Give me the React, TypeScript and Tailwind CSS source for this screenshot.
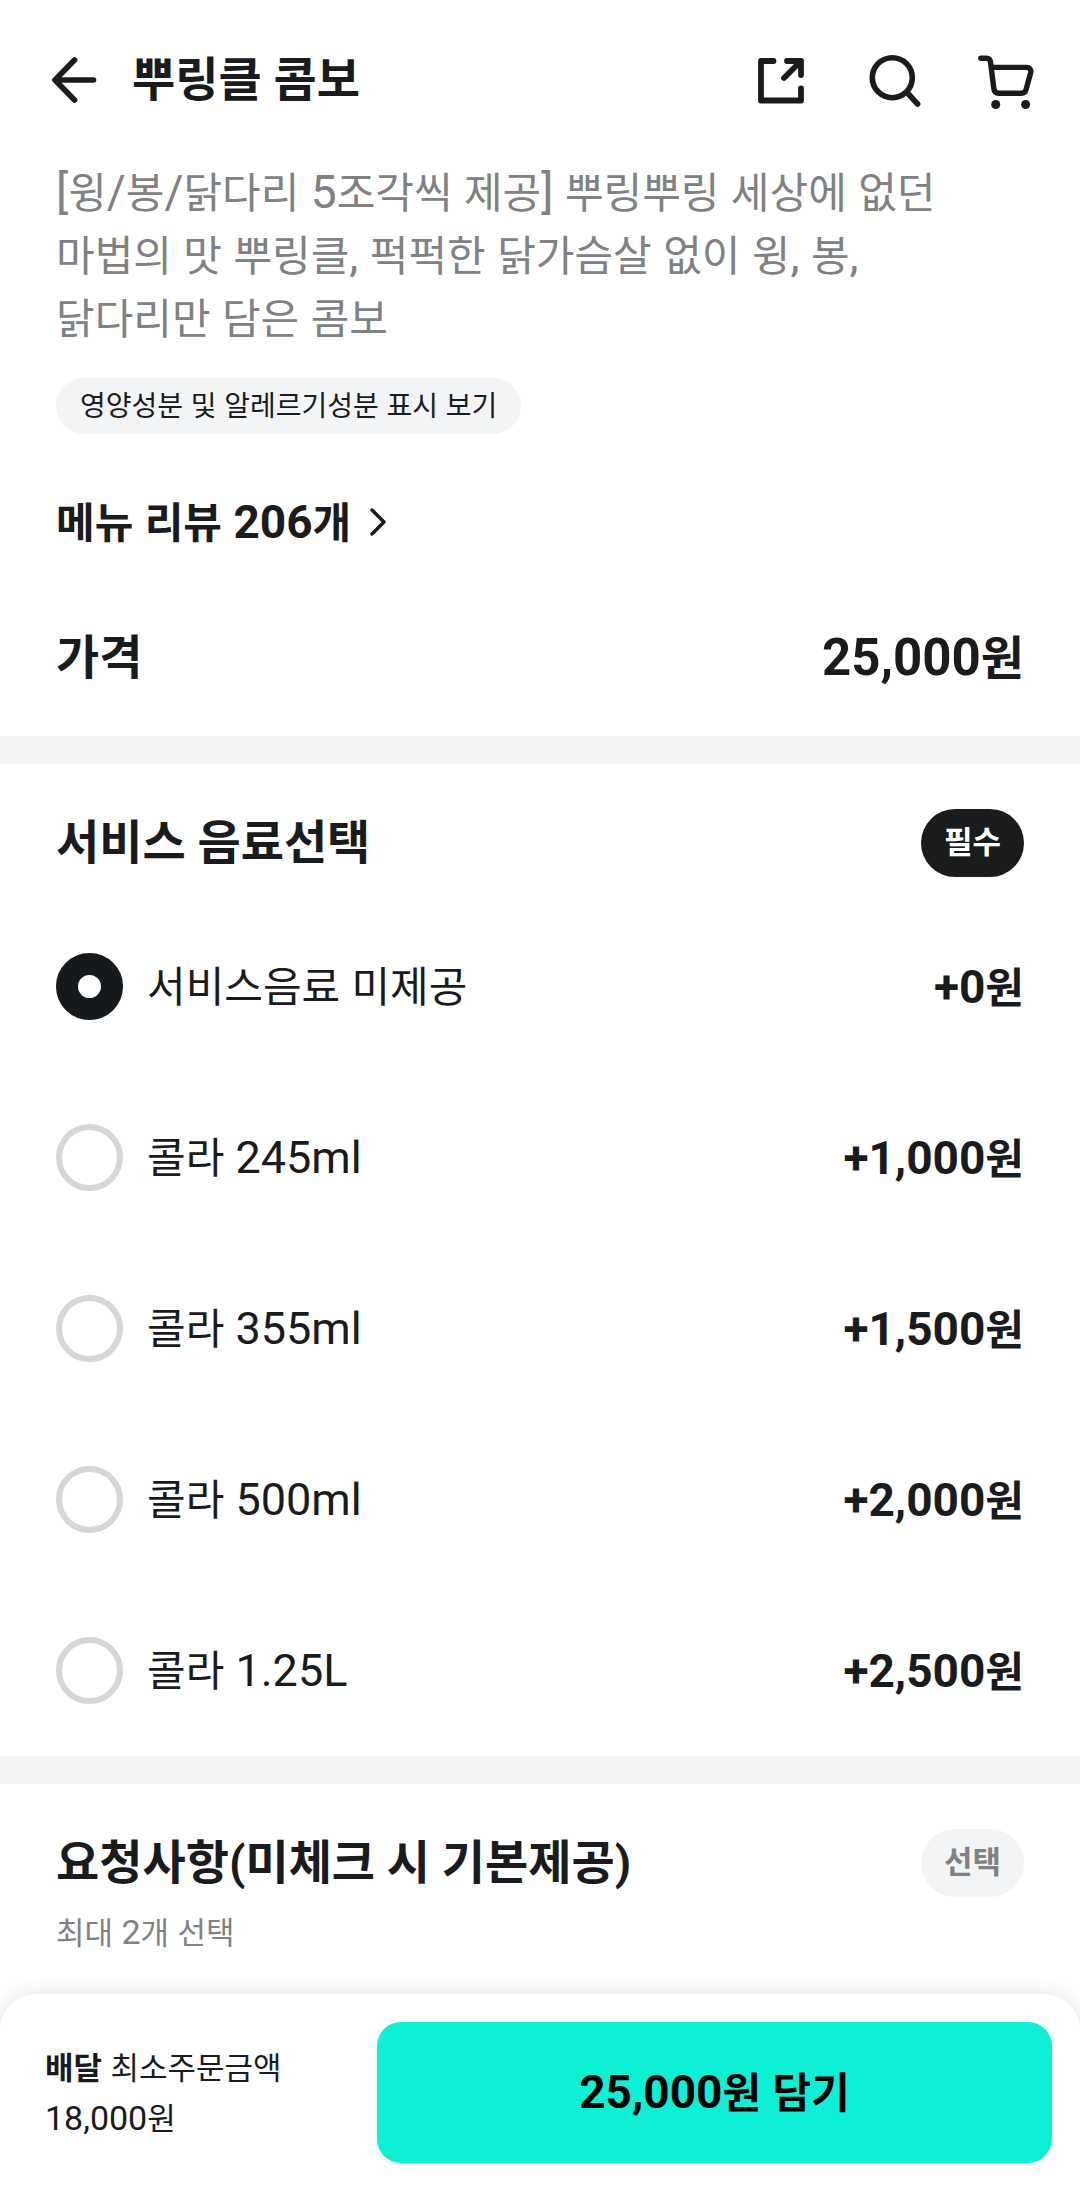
import React, {useState} from "react";

const DRINKS = [
  {id: "none", name: "서비스음료 미제공", price: "+0원"},
  {id: "coke245", name: "콜라 245ml", price: "+1,000원"},
  {id: "coke355", name: "콜라 355ml", price: "+1,500원"},
  {id: "coke500", name: "콜라 500ml", price: "+2,000원"},
  {id: "coke125", name: "콜라 1.25L", price: "+2,500원"},
];

// Korean glyphs run large next to Roboto, so they get their own size
const Mixed = ({text, korean}: {text: string; korean: string}) => (
  <>
    {text.split(/([가-힣]+)/).map((part, index) =>
      index % 2 ? (
        <span key={index} className={korean}>
          {part}
        </span>
      ) : (
        part
      )
    )}
  </>
);

const BackIcon = () => (
  <svg width="64" height="64" viewBox="0 0 64 64" fill="none" stroke="currentColor" strokeWidth="5.6" strokeLinecap="round" strokeLinejoin="round">
    <path d="M49.5 32H11M30.5 12 11 32l19.5 20" />
  </svg>
);

const ShareIcon = () => (
  <svg width="64" height="64" viewBox="0 0 64 64" fill="none" stroke="currentColor" strokeWidth="5.8" strokeLinecap="round" strokeLinejoin="round">
    <path d="M23.5 13H11v39.5h40V40.5M37 13h14v14M51 13 34 30" />
  </svg>
);

const SearchIcon = () => (
  <svg width="64" height="64" viewBox="0 0 64 64" fill="none" stroke="currentColor" strokeWidth="5.6" strokeLinecap="round">
    <circle cx="30.3" cy="29.7" r="20" />
    <path d="M45 44.5 55.6 56" />
  </svg>
);

const CartIcon = () => (
  <svg width="64" height="64" viewBox="0 0 64 64" fill="none" stroke="currentColor" strokeWidth="5.4" strokeLinecap="round" strokeLinejoin="round">
    <path d="M6.8 10.3h5.5c2.4 0 3.9 1.4 4.2 3.8l3.3 26.3c.4 3.2 2.1 4.9 5 4.9h22.4c2.7 0 4.3-1.3 4.9-3.9l4.5-16.4c.9-3.6-.9-5.6-4.4-5.6H17.5" />
    <circle cx="21.7" cy="56.5" r="4.5" fill="currentColor" stroke="none" />
    <circle cx="51.6" cy="56.5" r="4.5" fill="currentColor" stroke="none" />
  </svg>
);

const SectionHeader = ({title, badge, required}: {title: string; badge: string; required?: boolean}) => (
  <div className="flex items-center justify-between">
    <h2 className="text-[47px] leading-[68px] font-bold">{title}</h2>
    <span
      className={
        required
          ? "rounded-full bg-[#1a1b1c] px-[23px] text-[31px] leading-[68px] font-bold text-white"
          : "rounded-full bg-[#f3f4f6] px-[23px] text-[31px] leading-[68px] font-bold text-[#808182]"
      }
    >
      {badge}
    </span>
  </div>
);

const App = () => {
  const [selected, setSelected] = useState("none");

  return (
    <div className="flex min-h-screen flex-col bg-white font-[Roboto,'Noto_Sans_CJK_KR',sans-serif] text-[#1a1b1c]">
      <header className="flex h-40 items-center pr-[42px] pl-11">
        <button type="button" aria-label="뒤로">
          <BackIcon />
        </button>
        <h1 className="ml-6 flex-1 text-[47px] leading-[68px] font-bold">뿌링클 콤보</h1>
        <div className="flex gap-12">
          <button type="button" aria-label="공유">
            <ShareIcon />
          </button>
          <button type="button" aria-label="검색">
            <SearchIcon />
          </button>
          <button type="button" aria-label="장바구니">
            <CartIcon />
          </button>
        </div>
      </header>

      <main className="pt-px">
        <section className="px-14 pb-11">
          <p className="text-[46px] leading-[63px] break-keep text-[#808182]">
            <Mixed
              text="[윙/봉/닭다리 5조각씩 제공] 뿌링뿌링 세상에 없던 마법의 맛 뿌링클, 퍽퍽한 닭가슴살 없이 윙, 봉, 닭다리만 담은 콤보"
              korean="text-[42px] leading-none"
            />
          </p>
          <button type="button" className="mt-7 block rounded-full bg-[#f3f4f6] px-6 text-[31px] leading-[56px]">
            <Mixed text="영양성분 및 알레르기성분 표시 보기" korean="text-[28px] leading-none" />
          </button>
          <a href="#reviews" className="mt-14 flex items-center gap-[18px] text-[46px] leading-[64px] font-bold">
            <span>
              <Mixed text="메뉴 리뷰 206개" korean="text-[42px] leading-none" />
            </span>
            <svg width="18" height="30" viewBox="0 0 18 30" fill="none" stroke="currentColor" strokeWidth="3.4" strokeLinecap="round" strokeLinejoin="round">
              <path d="M3 3l12 12L3 27" />
            </svg>
          </a>
          <div className="mt-[70px] flex items-center justify-between text-[51px] leading-[68px] font-bold">
            <h2 className="text-[47px]">가격</h2>
            <span>
              <Mixed text="25,000원" korean="text-[47px] leading-none" />
            </span>
          </div>
        </section>

        <section className="border-t-[28px] border-[#f3f4f6] px-14 pt-[45px]">
          <SectionHeader title="서비스 음료선택" badge="필수" required />
          <div className="mt-6">
            {DRINKS.map((drink) => (
              <label key={drink.id} className="flex h-[171px] items-center leading-[64px]">
                <input
                  type="radio"
                  name="drink"
                  checked={selected === drink.id}
                  onChange={() => setSelected(drink.id)}
                  className="size-[67px] shrink-0 appearance-none rounded-full border-[6px] border-[#d5d6d8] checked:border-[22px] checked:border-[#171a1c]"
                />
                <span className="ml-6 flex-1 text-[45px]">
                  <Mixed text={drink.name} korean="text-[42px] leading-none" />
                </span>
                <span className="text-[46px] font-bold">
                  <Mixed text={drink.price} korean="text-[42px] leading-none" />
                </span>
              </label>
            ))}
          </div>
        </section>

        <section className="border-t-[28px] border-[#f3f4f6] px-14 pt-[45px]">
          <SectionHeader title="요청사항(미체크 시 기본제공)" badge="선택" />
          <p className="mt-2.5 text-[34px] leading-[51px] text-[#808182]">
            <Mixed text="최대 2개 선택" korean="text-[31px] leading-none" />
          </p>
        </section>
      </main>

      <footer className="mt-auto flex items-center rounded-t-[36px] bg-white py-7 pr-7 pl-[45px] shadow-[0_0_20px_rgba(0,0,0,0.12)]">
        <p className="w-[332px] shrink-0 text-[34px] leading-[51px]">
          <b className="text-[31px] leading-none">배달</b>
          <Mixed text=" 최소주문금액" korean="text-[31px] leading-none" />
          <br />
          <Mixed text="18,000원" korean="text-[31px] leading-none" />
        </p>
        <button type="button" className="h-[141px] flex-1 rounded-3xl bg-[#0ef0d6] text-[46px] font-bold text-black">
          <Mixed text="25,000원 담기" korean="text-[42px] leading-none" />
        </button>
      </footer>
    </div>
  );
};

export default App;
